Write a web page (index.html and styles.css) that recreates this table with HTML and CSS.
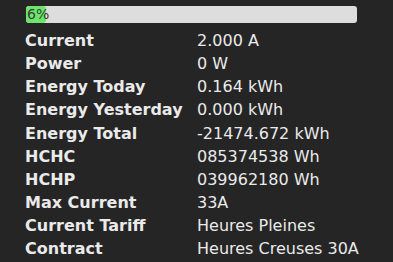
FILE: index.html
```html
<!DOCTYPE html>
<html>
<head>
<meta charset="utf-8">
<link rel="stylesheet" href="styles.css">
</head>
<body>
<div class="wrap">
  <div class="bar"><div class="fill" style="width:20px"></div><span class="pct">6%</span></div>
  <div class="table">
    <div class="row"><span class="k">Current</span><span class="v">2.000 A</span></div>
    <div class="row"><span class="k">Power</span><span class="v">0 W</span></div>
    <div class="row"><span class="k">Energy Today</span><span class="v">0.164 kWh</span></div>
    <div class="row"><span class="k">Energy Yesterday</span><span class="v">0.000 kWh</span></div>
    <div class="row"><span class="k">Energy Total</span><span class="v">-21474.672 kWh</span></div>
    <div class="row"><span class="k">HCHC</span><span class="v">085374538 Wh</span></div>
    <div class="row"><span class="k">HCHP</span><span class="v">039962180 Wh</span></div>
    <div class="row"><span class="k">Max Current</span><span class="v">33A</span></div>
    <div class="row"><span class="k">Current Tariff</span><span class="v">Heures Pleines</span></div>
    <div class="row"><span class="k">Contract</span><span class="v">Heures Creuses 30A</span></div>
  </div>
</div>
</body>
</html>
```
FILE: styles.css
```css
html, body {
  margin: 0;
  padding: 0;
  background: #252525;
  color: #eaeaea;
  font-family: Verdana, "DejaVu Sans", sans-serif;
}
.wrap {
  padding: 6px 0 0 25px;
}
.bar {
  position: relative;
  width: 331px;
  height: 17px;
  margin-left: 1px;
  background: #dddddd;
  border-radius: 3px;
  overflow: hidden;
}
.fill {
  position: absolute;
  left: 0;
  top: 0;
  bottom: 0;
  background: #6be66b;
  border-radius: 3px;
}
.pct {
  position: relative;
  display: block;
  padding-left: 1px;
  font-size: 14px;
  line-height: 17px;
  color: #3a3a3a;
}
.table {
  margin-top: 6px;
}
.row {
  display: grid;
  grid-template-columns: 172px auto;
  height: 23.15px;
  line-height: 23.15px;
  font-size: 16px;
}
.k {
  font-weight: bold;
}
```
